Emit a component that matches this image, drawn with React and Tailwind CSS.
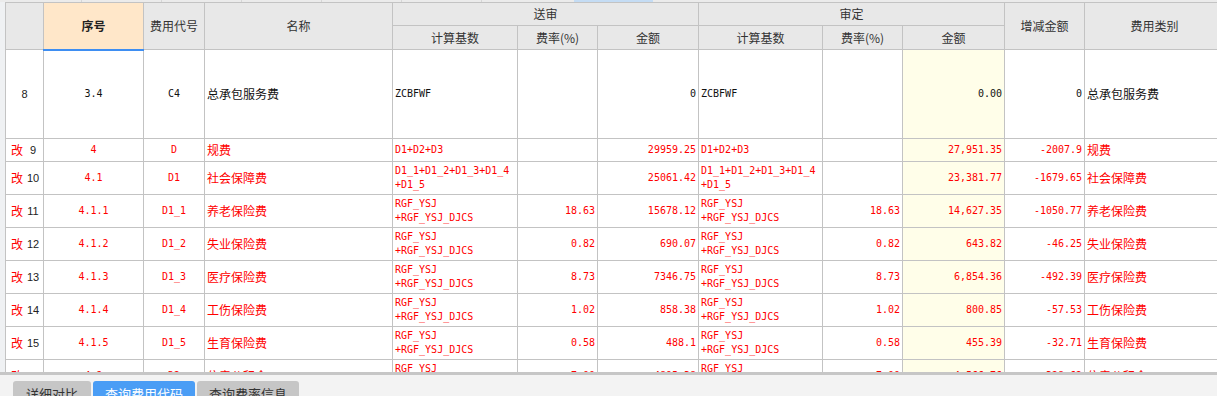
import React from "react";

const mono = "font-['DejaVu_Sans_Mono','Liberation_Mono',monospace] text-[10px] leading-[14px]";
const cjk = "font-['Noto_Sans_CJK_SC','Microsoft_YaHei',sans-serif] text-[12px]";

const cols = [38, 100, 61, 188, 125, 80, 101, 124, 80, 102, 80, 140];

const ysj = ["RGF_YSJ", "+RGF_YSJ_DJCS"];

const rows = [
  { no: "8", mark: false, seq: "3.4", code: "C4", name: "总承包服务费", base: ["ZCBFWF"], rate: "", amt: "0", abase: ["ZCBFWF"], arate: "", aamt: "0.00", diff: "0", cat: "总承包服务费", h: "h-[89px]" },
  { no: "9", mark: true, seq: "4", code: "D", name: "规费", base: ["D1+D2+D3"], rate: "", amt: "29959.25", abase: ["D1+D2+D3"], arate: "", aamt: "27,951.35", diff: "-2007.9", cat: "规费", h: "h-[23px]" },
  { no: "10", mark: true, seq: "4.1", code: "D1", name: "社会保障费", base: ["D1_1+D1_2+D1_3+D1_4", "+D1_5"], rate: "", amt: "25061.42", abase: ["D1_1+D1_2+D1_3+D1_4", "+D1_5"], arate: "", aamt: "23,381.77", diff: "-1679.65", cat: "社会保障费", h: "h-[33px]" },
  { no: "11", mark: true, seq: "4.1.1", code: "D1_1", name: "养老保险费", base: ysj, rate: "18.63", amt: "15678.12", abase: ysj, arate: "18.63", aamt: "14,627.35", diff: "-1050.77", cat: "养老保险费", h: "h-[33px]" },
  { no: "12", mark: true, seq: "4.1.2", code: "D1_2", name: "失业保险费", base: ysj, rate: "0.82", amt: "690.07", abase: ysj, arate: "0.82", aamt: "643.82", diff: "-46.25", cat: "失业保险费", h: "h-[33px]" },
  { no: "13", mark: true, seq: "4.1.3", code: "D1_3", name: "医疗保险费", base: ysj, rate: "8.73", amt: "7346.75", abase: ysj, arate: "8.73", aamt: "6,854.36", diff: "-492.39", cat: "医疗保险费", h: "h-[33px]" },
  { no: "14", mark: true, seq: "4.1.4", code: "D1_4", name: "工伤保险费", base: ysj, rate: "1.02", amt: "858.38", abase: ysj, arate: "1.02", aamt: "800.85", diff: "-57.53", cat: "工伤保险费", h: "h-[33px]" },
  { no: "15", mark: true, seq: "4.1.5", code: "D1_5", name: "生育保险费", base: ysj, rate: "0.58", amt: "488.1", abase: ysj, arate: "0.58", aamt: "455.39", diff: "-32.71", cat: "生育保险费", h: "h-[33px]" },
  { no: "16", mark: true, seq: "4.2", code: "D2", name: "住房公积金", base: ysj, rate: "7.00", amt: "4895.38", abase: ysj, arate: "7.00", aamt: "4,566.76", diff: "-328.62", cat: "住房公积金", h: "h-[33px]" },
];

const td = "border border-[#c3c3c3] p-0 align-middle";
const thBase = "border border-[#c3c3c3] p-0 align-middle text-center";
const th = `${thBase} bg-[#e8e8e8] font-normal text-[#333]`;

function Lines({ items }) {
  return (
    <div className="pl-[2px] pr-[1px]">
      {items.map((l) => (
        <div key={l} className="whitespace-nowrap">{l}</div>
      ))}
    </div>
  );
}

function DataRow({ r }) {
  const color = r.mark ? "text-[#ff0000]" : "text-[#111]";
  return (
    <tr className={r.h}>
      <td className={`${td} bg-white`}>
        {r.mark ? (
          <div className="flex items-center">
            <span className={`${cjk} pl-[5px] text-[#ff0000]`}>改</span>
            <span className="flex-1 text-center font-['Liberation_Sans',sans-serif] text-[11px] text-[#222]">{r.no}</span>
          </div>
        ) : (
          <div className="text-center font-['Liberation_Sans',sans-serif] text-[11px] text-[#222]">{r.no}</div>
        )}
      </td>
      <td className={`${td} ${mono} ${color} text-center`}>{r.seq}</td>
      <td className={`${td} ${mono} ${color} text-center`}>{r.code}</td>
      <td className={`${td} ${cjk} ${color} pl-[2px]`}>{r.name}</td>
      <td className={`${td} ${mono} ${color}`}><Lines items={r.base} /></td>
      <td className={`${td} ${mono} ${color} pr-[2px] text-right`}>{r.rate}</td>
      <td className={`${td} ${mono} ${color} pr-[2px] text-right`}>{r.amt}</td>
      <td className={`${td} ${mono} ${color}`}><Lines items={r.abase} /></td>
      <td className={`${td} ${mono} ${color} pr-[2px] text-right`}>{r.arate}</td>
      <td className={`${td} ${mono} ${color} bg-[#fffee9] pr-[2px] text-right`}>{r.aamt}</td>
      <td className={`${td} ${mono} ${color} pr-[2px] text-right`}>{r.diff}</td>
      <td className={`${td} ${cjk} ${color} pl-[2px] whitespace-nowrap`}>{r.cat}</td>
    </tr>
  );
}

export default function App() {
  return (
    <div className="flex h-[396px] w-[1217px] flex-col overflow-hidden bg-white">
      <div className="flex h-[2px] shrink-0 bg-[#ebebeb]">
        <div className="w-[82px] border-r border-[#d6d6d6]" />
        <div className="w-[80px] border-r border-[#d6d6d6]" />
        <div className="w-[80px] border-r border-[#d6d6d6]" />
        <div className="w-[80px] border-r border-[#d6d6d6]" />
        <div className="w-[80px] border-r border-[#d6d6d6]" />
        <div className="w-[80px] border-r border-[#d6d6d6]" />
        <div className="w-[92px]" />
        <div className="w-[79px] bg-[#c4dcf4]" />
      </div>
      <div className="flex h-[370px] shrink-0 overflow-hidden">
        <div className="w-[5px] shrink-0 bg-[#eff1f3]" />
        <div className="flex-1 overflow-hidden">
          <table className={`w-[1219px] table-fixed border-collapse ${cjk}`}>
            <colgroup>
              {cols.map((w, i) => (
                <col key={i} style={{ width: w }} />
              ))}
            </colgroup>
            <thead>
              <tr className="h-[23px]">
                <th rowSpan={2} className={th}></th>
                <th rowSpan={2} className={`${thBase} border-b-2 border-b-[#3e8ef2] bg-[#ffe7c9] font-bold text-[#222]`}>序号</th>
                <th rowSpan={2} className={th}>费用代号</th>
                <th rowSpan={2} className={th}>名称</th>
                <th colSpan={3} className={th}>送审</th>
                <th colSpan={3} className={th}>审定</th>
                <th rowSpan={2} className={th}>增减金额</th>
                <th rowSpan={2} className={th}>费用类别</th>
              </tr>
              <tr className="h-[24px]">
                <th className={th}>计算基数</th>
                <th className={th}>费率(%)</th>
                <th className={th}>金额</th>
                <th className={th}>计算基数</th>
                <th className={th}>费率(%)</th>
                <th className={th}>金额</th>
              </tr>
            </thead>
            <tbody>
              {rows.map((r) => (
                <DataRow key={r.no} r={r} />
              ))}
            </tbody>
          </table>
        </div>
      </div>
      <div className="h-[3px] shrink-0 bg-[#c6c6c6]" />
      <div className="flex flex-1 gap-[2px] bg-[#f3f3f3] pl-[13px] pt-[6px]">
        <button type="button" className={`${cjk} h-[26px] w-[78px] rounded-t-[3px] bg-[#c6c6c6] text-[13px] text-[#333]`}>详细对比</button>
        <button type="button" className={`${cjk} h-[26px] w-[102px] rounded-t-[3px] bg-[#4a9df5] text-[13px] text-white`}>查询费用代码</button>
        <button type="button" className={`${cjk} h-[26px] w-[102px] rounded-t-[3px] bg-[#c6c6c6] text-[13px] text-[#333]`}>查询费率信息</button>
      </div>
    </div>
  );
}
